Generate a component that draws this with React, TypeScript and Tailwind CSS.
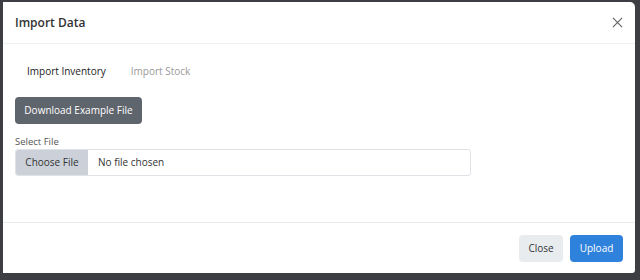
export default function App() {
  return (
    <div
      className="w-[640px] h-[280px] bg-[#3c3e43] pt-[2px] pl-[3px] pr-[5px] pb-[7px] overflow-hidden"
      style={{ fontFamily: '"Open Sans", "Noto Sans", sans-serif' }}
    >
      <div className="h-full bg-white rounded-tr-[5px] rounded-br-[3px] flex flex-col">
        <div className="h-[42px] flex items-center justify-between pl-[12px] pr-[12px] border-b border-[#eef0f2]">
          <h5 className="text-[12px] font-semibold text-[#333]">Import Data</h5>
          <svg width="11" height="11" viewBox="0 0 12 12" className="text-[#666]">
            <path d="M1 1L11 11M11 1L1 11" stroke="currentColor" strokeWidth="1.3" />
          </svg>
        </div>
        <div className="flex-1 px-[12px] pt-[17px]">
          <div className="flex text-[10px] font-medium h-[21px] items-center">
            <span className="px-[12px] text-[#222]">Import Inventory</span>
            <span className="px-[13px] text-[#999]">Import Stock</span>
          </div>
          <button className="mt-[15px] h-[27px] w-[127px] rounded-[4px] bg-[#5f656d] text-white text-[10px] font-medium">
            Download Example File
          </button>
          <div className="mt-[11px] text-[9.5px] text-[#555] leading-[13px]">Select File</div>
          <div className="mt-[1px] h-[27px] w-[456px] border border-[#dfe2e6] rounded-[3px] flex items-center text-[10px] font-medium text-[#333] overflow-hidden">
            <span className="h-full w-[72px] bg-[#ccd1d9] flex items-center justify-center">Choose File</span>
            <span className="pl-[10px]">No file chosen</span>
          </div>
        </div>
        <div className="h-[51px] border-t border-[#e9ebee] flex items-center justify-end gap-[7px] pr-[12px] pt-[1px]">
          <button className="h-[27px] w-[44px] rounded-[4px] bg-[#e9ecef] text-[#333] text-[10px] font-medium">Close</button>
          <button className="h-[27px] w-[53px] rounded-[4px] bg-[#2f82dc] text-white text-[10px] font-medium">Upload</button>
        </div>
      </div>
    </div>
  );
}
